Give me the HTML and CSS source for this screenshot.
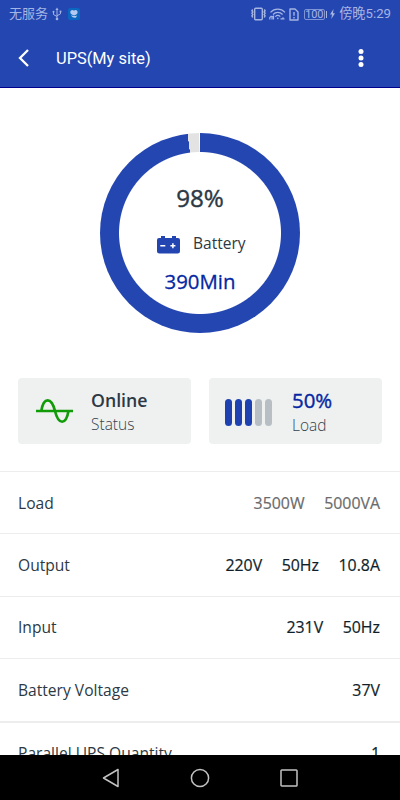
FILE: index.html
```html
<!DOCTYPE html>
<html lang="en">
<head>
<meta charset="utf-8">
<title>UPS(My site)</title>
<link rel="stylesheet" href="styles.css">
</head>
<body>
<div class="screen">
  <header class="top">
    <div class="statusbar">
      <span class="carrier">无服务</span>
      <svg class="usb" width="10" height="14" viewBox="0 0 10 14" fill="none" stroke="currentColor"><path d="M5 2v10M1.500 5v2.500L5 9.500M8.500 4.500v2.300L5 8.800"/><path d="M3.400 3 5 .6 6.600 3z" fill="currentColor" stroke="none"/><circle cx="5" cy="12" r="1.300" fill="currentColor" stroke="none"/><circle cx="1.500" cy="4.800" r="1" fill="currentColor" stroke="none"/><path d="M7.600 3.600h1.800v1.800H7.600z" fill="currentColor" stroke="none"/></svg>
      <svg class="app" width="12" height="12" viewBox="0 0 12 12"><rect width="12" height="12" rx="2" fill="#0b66c0"/><path d="M6 2.700C7 1.500 9.600 2 9.600 4.200 9.600 6 8 6.800 6.200 7.400 4 6.800 2.300 6 2.300 4.200 2.300 2 5 1.500 6 2.700z" fill="#b3c9ef"/><path d="M3 7.300c1.800 1 4 .9 6.200.2L8 9.600c-1.500.5-3.600.2-5-2.300z" fill="#b3c9ef"/></svg>
      <div class="system">
        <svg width="17" height="14" viewBox="0 0 17 14" fill="none" stroke="currentColor"><rect x="4.700" y="1.200" width="7.600" height="11.600" rx="1" stroke-width="1.400"/><path d="M2.700 2.500 2 3.700l.8 1.300L2 6.300l.8 1.300L2 8.900l.7 1.600M14.300 2.500l.7 1.200-.8 1.300.8 1.300-.8 1.300.8 1.300-.7 1.600" stroke-width="1.500"/></svg>
        <svg class="wifi" width="17" height="12" viewBox="0 0 17 12" fill="none" stroke="currentColor" stroke-width="1.200"><path d="M1.500 4.300c4-4.300 10.500-4.300 14.500 0M4 6.500c2.800-2.900 6.800-2.900 9.600 0M6.300 8.700c1.500-1.500 3.500-1.500 5 0"/><circle cx="8.800" cy="10.400" r=".8" fill="currentColor" stroke="none"/><path d="M.8 11.500V9.500L2.500 7.800M3 11.500V9l1.500-.7v3.200M11.500 10.800h4M14 9.300v2"/></svg>
        <svg class="sim" width="10" height="13" viewBox="0 0 10 13" fill="none" stroke="currentColor" stroke-width="1.400"><path d="M1 1h5l3 3v8H1z" stroke-linejoin="round"/><path d="M5 4v3.800M5 9v1.400"/></svg>
        <span class="charge">100</span><i class="pole"></i>
        <svg class="bolt" width="5" height="10" viewBox="0 0 5 10" fill="currentColor"><path d="M3.500 0 0 5.600h2L1.300 10 5 4.200H3z"/></svg>
        <span class="clock">傍晚5:29</span>
      </div>
    </div>
    <div class="appbar">
      <svg width="12" height="20" viewBox="0 0 12 20" fill="none" stroke="#fff" stroke-width="2.300"><path d="M10 2 2 10l8 8"/></svg>
      <h1>UPS(My site)</h1>
      <svg class="more" width="6" height="20" viewBox="0 0 6 20" fill="#fff"><circle cx="3" cy="3.400" r="2.500"/><circle cx="3" cy="10" r="2.500"/><circle cx="3" cy="16.600" r="2.500"/></svg>
    </div>
  </header>
  <main>
    <section class="gauge">
      <div class="percent">98%</div>
      <div class="battery">
        <svg width="23" height="18" viewBox="0 0 23 18"><path d="M4 0h4v2h7V0h4v2h2a2 2 0 0 1 2 2v11a2.500 2.500 0 0 1-2.500 2.500h-18A2.500 2.500 0 0 1 0 15V4a2 2 0 0 1 2-2h2z" fill="#2245b1"/><path d="M3.300 9.700h5M13.400 9.700h5M15.900 7.200v5" stroke="#fff" stroke-width="1.500"/></svg>
        <span>Battery</span>
      </div>
      <div class="minutes">390Min</div>
    </section>
    <section class="cards">
      <div class="card status">
        <svg width="37" height="26" viewBox="0 0 37 26" fill="none" stroke="#129b09" stroke-width="2.700"><path d="M0 13h37M5.300 13C7.500-1.300 15.500-1.300 19 13s11 14.300 13.500 0"/></svg>
        <div><strong>Online</strong><small>Status</small></div>
      </div>
      <div class="card load">
        <div class="bars"><i class="on"></i><i class="on"></i><i class="on"></i><i></i><i></i></div>
        <div><strong>50%</strong><small>Load</small></div>
      </div>
    </section>
    <dl class="details">
      <div class="row muted"><dt>Load</dt><dd>3500W</dd><dd>5000VA</dd></div>
      <div class="row"><dt>Output</dt><dd>220V</dd><dd>50Hz</dd><dd>10.8A</dd></div>
      <div class="row"><dt>Input</dt><dd>231V</dd><dd>50Hz</dd></div>
      <div class="row"><dt>Battery Voltage</dt><dd>37V</dd></div>
      <div class="row last"><dt>Parallel UPS Quantity</dt><dd>1</dd></div>
    </dl>
  </main>
  <nav>
    <svg width="18" height="20" viewBox="0 0 18 20"><path d="M16 1.500v17L1.500 10z"/></svg>
    <svg width="20" height="20" viewBox="0 0 20 20"><circle cx="10" cy="10" r="8.600"/></svg>
    <svg width="18" height="18" viewBox="0 0 18 18"><rect x="1" y="1" width="16" height="16" rx=".8"/></svg>
  </nav>
</div>
</body>
</html>
```
FILE: styles.css
```css
* { box-sizing: border-box; }
body { margin: 0; background: #fff; font-family: "Open Sans", "Noto Sans", sans-serif; color: #2c3944; }
svg { display: block; flex: none; }
.screen { width: 400px; height: 800px; display: flex; flex-direction: column; overflow: hidden; }

.top { flex: none; height: 88px; background: #2446b1; border-bottom: 1px solid #00008f; }
.statusbar { height: 28px; padding: 0 9px; display: flex; align-items: center; color: #a5b5e3; font: 13px/28px Roboto, "Noto Sans CJK SC", sans-serif; }
.usb { margin-left: 4px; }
.app { margin-left: 6px; }
.system { margin-left: auto; display: flex; align-items: center; }
.wifi { margin-left: 2px; }
.sim { margin-left: 3px; }
.charge { margin-left: 5px; width: 21px; height: 11px; border: 1px solid #7e94d4; border-radius: 2px; font-size: 11px; line-height: 9px; text-align: center; letter-spacing: -.2px; }
.pole { width: 1.500px; height: 7px; margin-left: 1px; background: #a5b5e3; }
.bolt { margin: 0 4px 0 3px; }
.clock { font-size: 13.200px; }
.appbar { height: 60px; padding: 0 36px 0 18px; display: flex; align-items: center; }
.appbar h1 { margin: 1px 0 0 26px; color: #fff; font: 400 16.400px/22px Roboto, sans-serif; }
.more { margin-left: auto; }

main { flex: 1; min-height: 0; overflow: hidden; }
.gauge { width: 200px; height: 200px; margin: 45px auto 0; padding-top: 49px; border-radius: 50%; text-align: center;
  background: radial-gradient(circle, #fff 80.500px, transparent 81.500px), conic-gradient(#2446b1 352.800deg, #e3e3e3 352.900deg 359.600deg, #fff 359.700deg); }
.percent { font-size: 24.200px; line-height: 32px; -webkit-text-stroke: .4px; }
.battery { margin-top: 17px; height: 24px; display: flex; align-items: center; padding-left: 57px; gap: 13px; font-size: 15.500px; }
.battery svg { margin-top: 4px; }
.minutes { margin-top: 12px; font-size: 20.400px; line-height: 28px; color: #0527a3; -webkit-text-stroke: .3px; }

.cards { margin: 45px 18px 0; display: grid; grid-template-columns: 1fr 1fr; gap: 18px; }
.card { height: 66px; border-radius: 4px; background: #eff1f1; display: flex; align-items: center; padding-left: 18px; }
.card strong, .card small { display: block; }
.card strong { font-size: 17.700px; line-height: 24px; font-weight: 600; }
.card small { font-size: 15.500px; line-height: 22px; font-weight: 300; color: #35424d; }
.status > div { margin: 1px 0 0 18px; }
.status small { margin-top: 1px; }
.load { padding-left: 16px; }
.load > div:last-child { margin: 2px 0 0 20px; }
.load strong { font-size: 20.400px; font-weight: 400; color: #0527a3; -webkit-text-stroke: .4px; }
.load small { margin-top: 2px; }
.bars { display: flex; gap: 3px; margin-top: 2px; }
.bars i { width: 7px; height: 27px; border-radius: 4px; background: #b7bfc4; }
.bars .on { background: #1d41b0; }

.details { margin: 27px 0 0; }
.row { height: 62.400px; border-top: 1.500px solid #ededed; padding: 0 20px 0 18px; display: flex; align-items: center; gap: 19.500px; font-size: 15.600px; }
.row dt { margin-right: auto; }
.row dd { margin: 0; font-size: 15.900px; color: #101e2a; -webkit-text-stroke: .2px; }
.row.muted dd { color: #6b6b6b; }
.last { border-top-width: 2px; }

nav { flex: none; height: 45px; background: #000; display: grid; grid-template-columns: 18px 20px 18px; justify-content: center; align-items: center; gap: 70px; }
nav svg { fill: none; stroke: #c2c2c2; stroke-width: 1.500; stroke-linejoin: round; }
```
